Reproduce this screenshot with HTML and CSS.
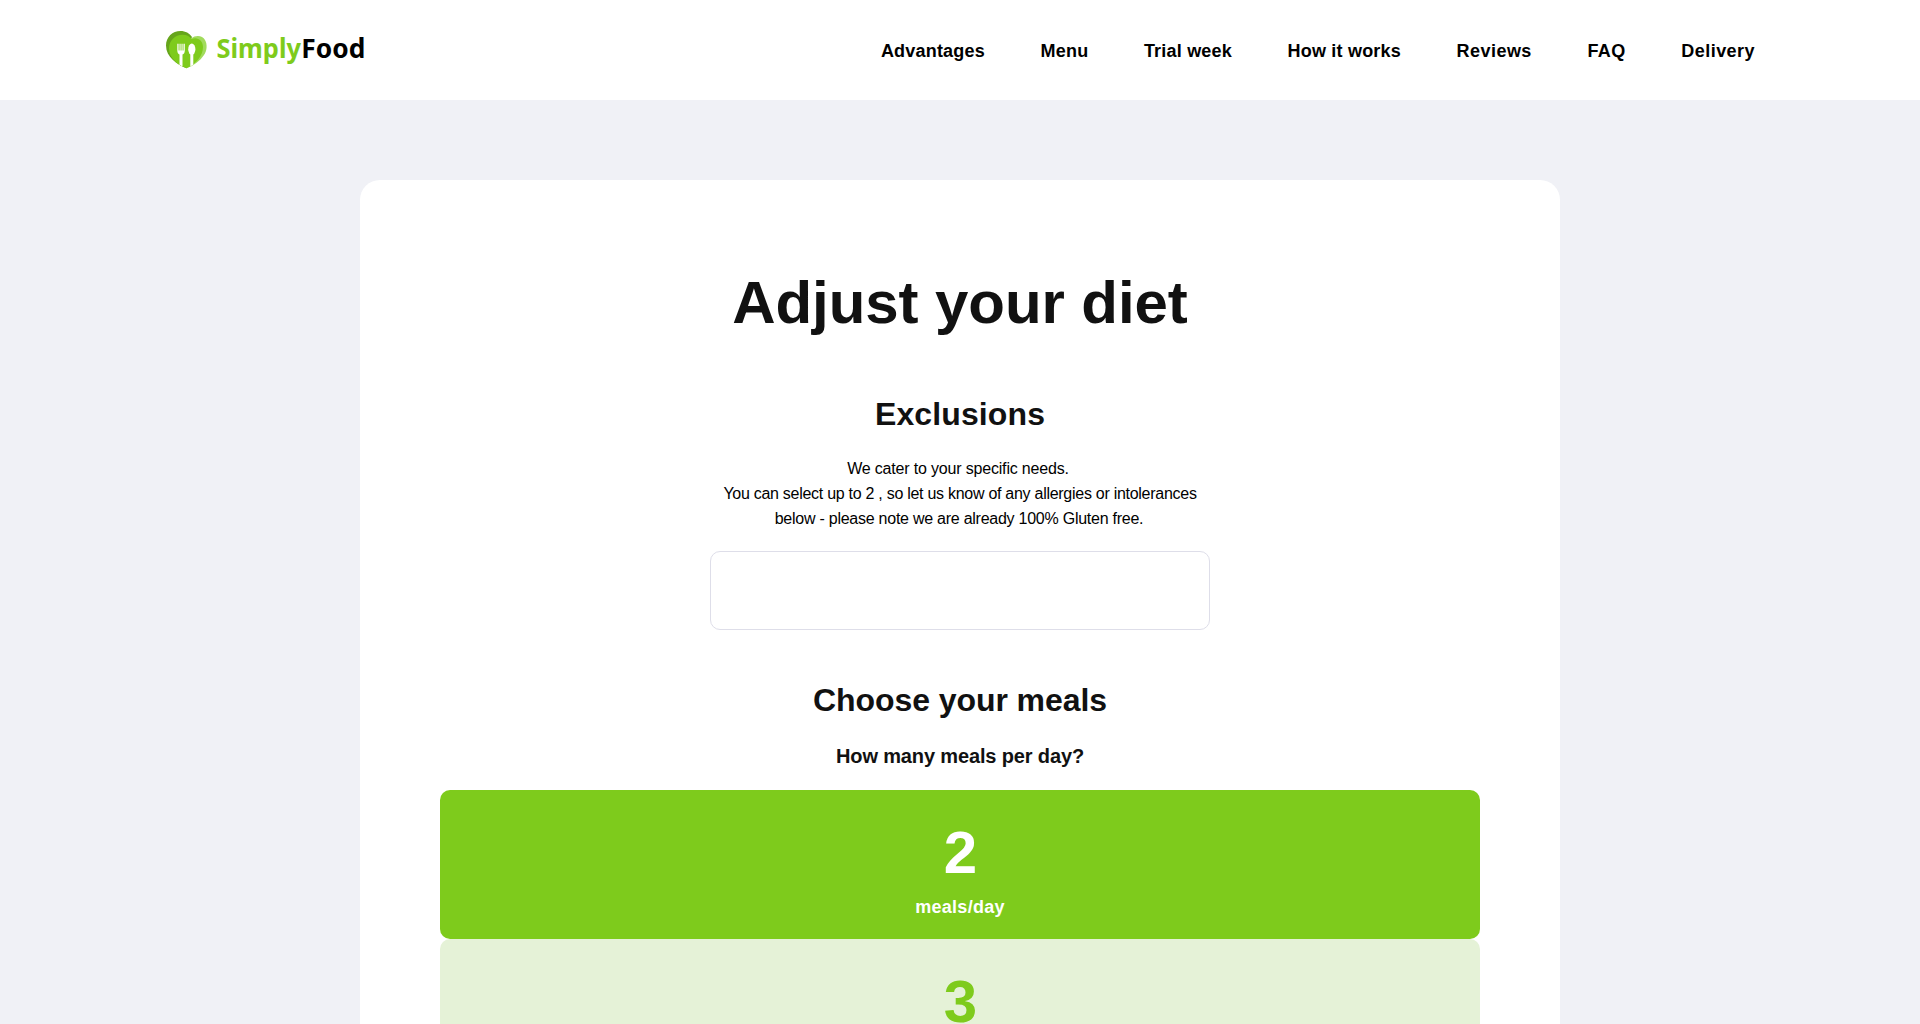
FILE: index.html
```html
<!DOCTYPE html>
<html lang="en">
<head>
<meta charset="utf-8">
<title>SimplyFood</title>
<link rel="stylesheet" href="styles.css">
</head>
<body>
<header class="header">
  <a class="logo" href="#">
    <svg width="200" height="40" viewBox="0 0 200 40" role="img" aria-label="SimplyFood">
      <path d="M21.500 38.300C12 34.500 1 27 1 15.500C1 7 7.500 1 15.500 1C20.500 1 24.500 3.200 27 7L21 20Z" fill="#66a51b"/>
      <path d="M26 8.500C31 4.500 37.500 5.500 40 10C42.500 14.500 42 20.500 39 25C35 31 29 35.500 21.500 38.300Z" fill="#a1db5c"/>
      <path d="M21.500 38.300C13 34.800 4 28.500 4 18.500C4 10.500 10 4.700 17.500 4.700C21.500 4.700 24.500 6.200 26.800 9C32.500 6.500 38 10.500 38 17C38 26 31 34 21.500 38.300Z" fill="#7ecb1c"/>
      <path d="M12.300 13.700V20.500C12.300 22.800 13.300 24 14.500 24.500V34.800L17.500 36.500V24.500C18.900 24 19.800 22.800 19.800 20.500V13.700H18.500V20.500H17.600V13.700H16.500V20.500H15.600V13.700H14.500V20.500H13.600V13.700Z" fill="#fff"/>
      <ellipse cx="26.800" cy="19.200" rx="3.600" ry="5.600" fill="#fff"/>
      <path d="M25.300 23H28.300V34.800L25.300 36.500Z" fill="#fff"/>
      <text class="logo-text" x="51.500" y="27.800" textLength="84.500" lengthAdjust="spacingAndGlyphs" fill="#7ecb1c">Simply</text>
      <text class="logo-text" x="136.300" y="27.800" textLength="64" lengthAdjust="spacingAndGlyphs" fill="#000">Food</text>
    </svg>
  </a>
  <nav class="nav">
    <a href="#">Advantages</a>
    <a href="#">Menu</a>
    <a href="#">Trial week</a>
    <a href="#">How it works</a>
    <a class="wide" href="#">Reviews</a>
    <a class="wide" href="#">FAQ</a>
    <a class="wide" href="#">Delivery</a>
  </nav>
</header>
<main class="card">
  <h1 class="title">Adjust your diet</h1>
  <h2 class="subtitle">Exclusions</h2>
  <p class="text"><span class="lead">We cater to your specific needs.</span><br>You can select up to 2 , so let us know of any allergies or intolerances<br><span class="note">below - please note we are already 100% Gluten free.</span></p>
  <div class="select"></div>
  <h2 class="subtitle subtitle-meals">Choose your meals</h2>
  <h3 class="question">How many meals per day?</h3>
  <div class="meals">
    <div class="meal meal-active"><span class="count">2</span><span class="unit">meals/day</span></div>
    <div class="meal"><span class="count">3</span><span class="unit">meals/day</span></div>
  </div>
</main>
</body>
</html>
```
FILE: styles.css
```css
* { box-sizing: border-box; }
html, body { height: 100%; overflow: hidden; }
body { margin: 0; background: #f0f1f6; color: #000; font-family: "Liberation Sans", Arial, sans-serif; }
.header { display: flex; justify-content: space-between; align-items: center; height: 100px; padding: 0 165px; background: #fff; }
.logo { display: block; height: 40px; }
.logo svg { display: block; overflow: visible; }
.logo-text { font: 700 26px "Noto Sans", sans-serif; }
.nav { display: flex; gap: 55.6px; padding-top: 2px; }
.nav a { color: #000; font-size: 18px; font-weight: 700; line-height: 24px; letter-spacing: 0.2px; text-decoration: none; }
.nav .wide { letter-spacing: 0.45px; }
.card { width: 1200px; margin: 80px auto 0; padding: 81px 80px 80px; border-radius: 20px; background: #fff; text-align: center; }
.title { margin: 0 0 49px; color: #111; font-size: 60px; line-height: 84px; letter-spacing: -0.08px; }
.subtitle { margin: 0 0 22px; color: #111; font-size: 32px; line-height: 40px; letter-spacing: 0.12px; }
.subtitle-meals { margin-bottom: 21px; letter-spacing: -0.07px; }
.text { margin: 0 0 20px; font-size: 16px; line-height: 25px; letter-spacing: -0.275px; }
.lead { padding-right: 4px; letter-spacing: -0.18px; }
.note { padding-right: 2px; letter-spacing: -0.25px; }
.select { width: 500px; height: 79px; margin: 0 auto 50px; border: 1px solid #dedee9; border-radius: 10px; }
.question { margin: 0 0 19px; color: #111; font-size: 20px; line-height: 30px; letter-spacing: -0.14px; }
.meal { display: flex; flex-direction: column; align-items: center; height: 149px; padding-top: 21px; border-radius: 10px; background: #e5f2d7; color: #7ecb1c; font-weight: 700; }
.meal-active { background: #7ecb1c; color: #fff; }
.count { padding-left: 1px; font-size: 60px; line-height: 84px; }
.unit { font-size: 18px; line-height: 25px; letter-spacing: 0.25px; }
```
